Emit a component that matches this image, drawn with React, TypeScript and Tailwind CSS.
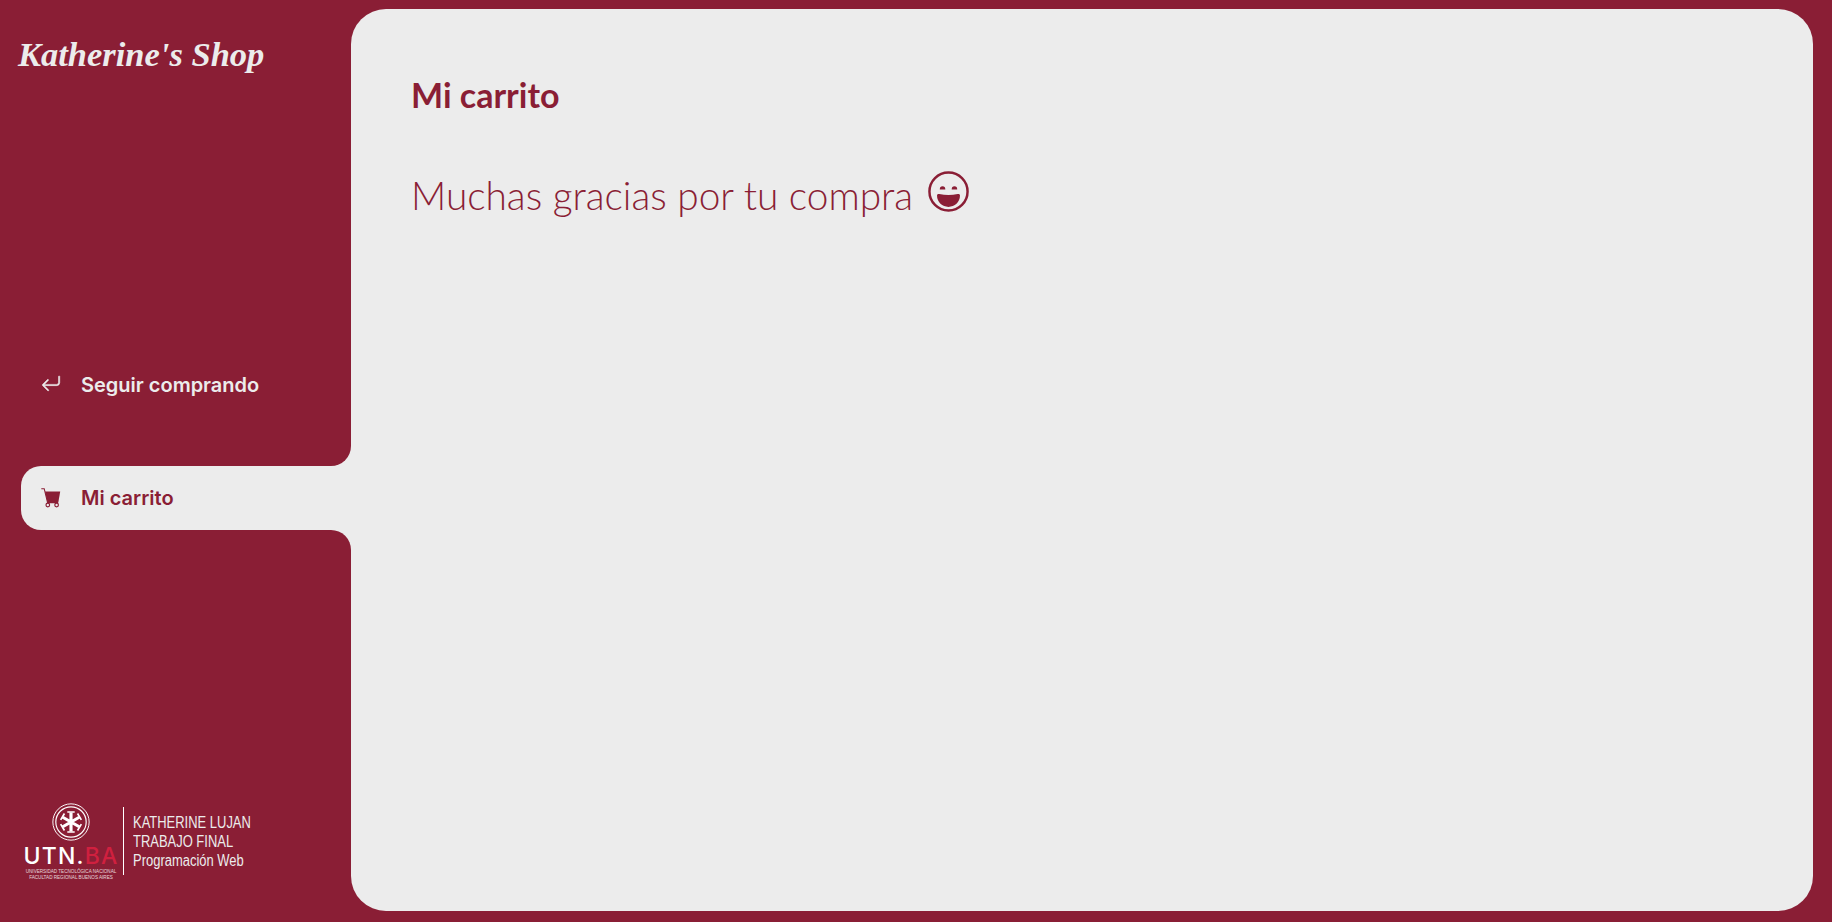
import { BsArrowReturnLeft } from "react-icons/bs";

function CartIcon() {
  return (
    <svg viewBox="0 0 20 20" className="w-5 h-5 shrink-0 -mt-[1px]">
      <path d="M0.3 0.7H3.2L6.6 14.6H17.2" fill="none" stroke="currentColor" strokeWidth="1.1" />
      <path d="M4 3.5H19.2L17.4 14H6.4z" fill="currentColor" />
      <circle cx="6.8" cy="17" r="1.8" fill="none" stroke="currentColor" strokeWidth="1.2" />
      <circle cx="15.6" cy="17" r="1.8" fill="none" stroke="currentColor" strokeWidth="1.2" />
    </svg>
  );
}

function SmileIcon() {
  return (
    <svg viewBox="0 0 40 40" className="w-[41px] h-[41px] shrink-0 -mt-[8px]" fill="currentColor">
      <circle cx="20" cy="20" r="18.6" fill="none" stroke="currentColor" strokeWidth="2.4" />
      <path d="M11.5 18a2.7 3.2 0 0 1 5.4 0zM23.1 18a2.7 3.2 0 0 1 5.4 0z" />
      <path d="M8.8 24c0-1.4 1-1.9 2.2-1.5q9 2 18 0c1.2-.4 2.2.1 2.2 1.5C31.2 30.5 26 35 20 35S8.8 30.5 8.8 24z" />
    </svg>
  );
}

function UtnLogo() {
  return (
    <div className="w-[94px] flex flex-col items-center text-white">
      <svg viewBox="0 0 36 36" className="w-[38px] h-[38px]" fill="none" stroke="currentColor">
        <circle cx="18" cy="18" r="17.2" strokeWidth="0.9" />
        <circle cx="18" cy="18" r="14.4" strokeWidth="1.1" />
        <path d="M18 9v18M10.2 13.5l15.6 9M25.8 13.5l-15.6 9" strokeWidth="3" />
        <path d="M14.5 8.5h7M14.5 27.5h7" strokeWidth="1.6" />
        <path d="M8.2 16l3.6-6M24.2 26l3.6-6M27.8 16l-3.6-6M11.8 26l-3.6-6" strokeWidth="1.6" />
      </svg>
      <div className="font-['Inter',sans-serif] font-medium text-[23px] leading-[25px] mt-[3px] tracking-[1.2px] whitespace-nowrap">
        UTN.<span className="text-[#d0203f]">BA</span>
      </div>
      <div className="font-['Liberation_Sans',sans-serif] text-[4.6px] leading-[5.5px] text-center whitespace-nowrap opacity-80">
        UNIVERSIDAD TECNOLÓGICA NACIONAL
        <br />
        FACULTAD REGIONAL BUENOS AIRES
      </div>
    </div>
  );
}

export default function App() {
  return (
    <div className="flex h-screen bg-[#ececec] font-['Inter',sans-serif]">
      {/* Sidebar */}
      <aside className="w-[351px] shrink-0 flex flex-col">
        <div className="h-[466px] bg-[#8a1e35] rounded-br-[20px] flex flex-col text-[#ececec]">
          <h1 className="pl-[18px] pt-[29px] font-['Liberation_Serif',serif] italic font-bold text-[34.5px] leading-[50px] whitespace-nowrap">
            Katherine's Shop
          </h1>
          <a className="mt-[294px] ml-[41px] flex items-center gap-5 h-[24px] font-semibold text-[20px]">
            <BsArrowReturnLeft className="w-5 h-5 shrink-0 stroke-[0.4px] -mt-[2px]" />
            Seguir comprando
          </a>
        </div>

        <div className="h-16 shrink-0 bg-[#8a1e35]">
          <a className="ml-[21px] h-16 bg-[#ececec] rounded-l-[20px] pl-5 flex items-center gap-5 font-semibold text-[20px] text-[#8a1e35]">
            <CartIcon />
            Mi carrito
          </a>
        </div>

        <div className="flex-1 bg-[#8a1e35] rounded-tr-[20px] flex flex-col justify-end pb-[42px] pl-[24px]">
          <div className="flex items-center text-[#ececec]">
            <UtnLogo />
            <div className="w-px h-[68px] bg-white ml-[5px] mr-[9px] -mt-[2px]" />
            <div className="font-['Liberation_Sans',sans-serif] text-[16px] leading-[19px] origin-left scale-x-[0.81] whitespace-nowrap">
              <p>KATHERINE LUJAN</p>
              <p>TRABAJO FINAL</p>
              <p>Programación Web</p>
            </div>
          </div>
        </div>
      </aside>

      {/* Contenido */}
      <div className="flex-1 min-w-0 bg-[#8a1e35] pt-[9px] pb-[11px] pr-[19px]">
        <main className="h-full bg-[#ececec] rounded-[35px] pl-[60px] pt-[64px] text-[#8a1e35]">
          <h2 className="font-['Lato',sans-serif] text-[34px] leading-[44px] font-bold">Mi carrito</h2>
          <div className="mt-[54px] flex items-center gap-[15px]">
            <p className="font-['Lato',sans-serif] font-light text-[38.8px] leading-[48px]">Muchas gracias por tu compra</p>
            <SmileIcon />
          </div>
        </main>
      </div>
    </div>
  );
}
